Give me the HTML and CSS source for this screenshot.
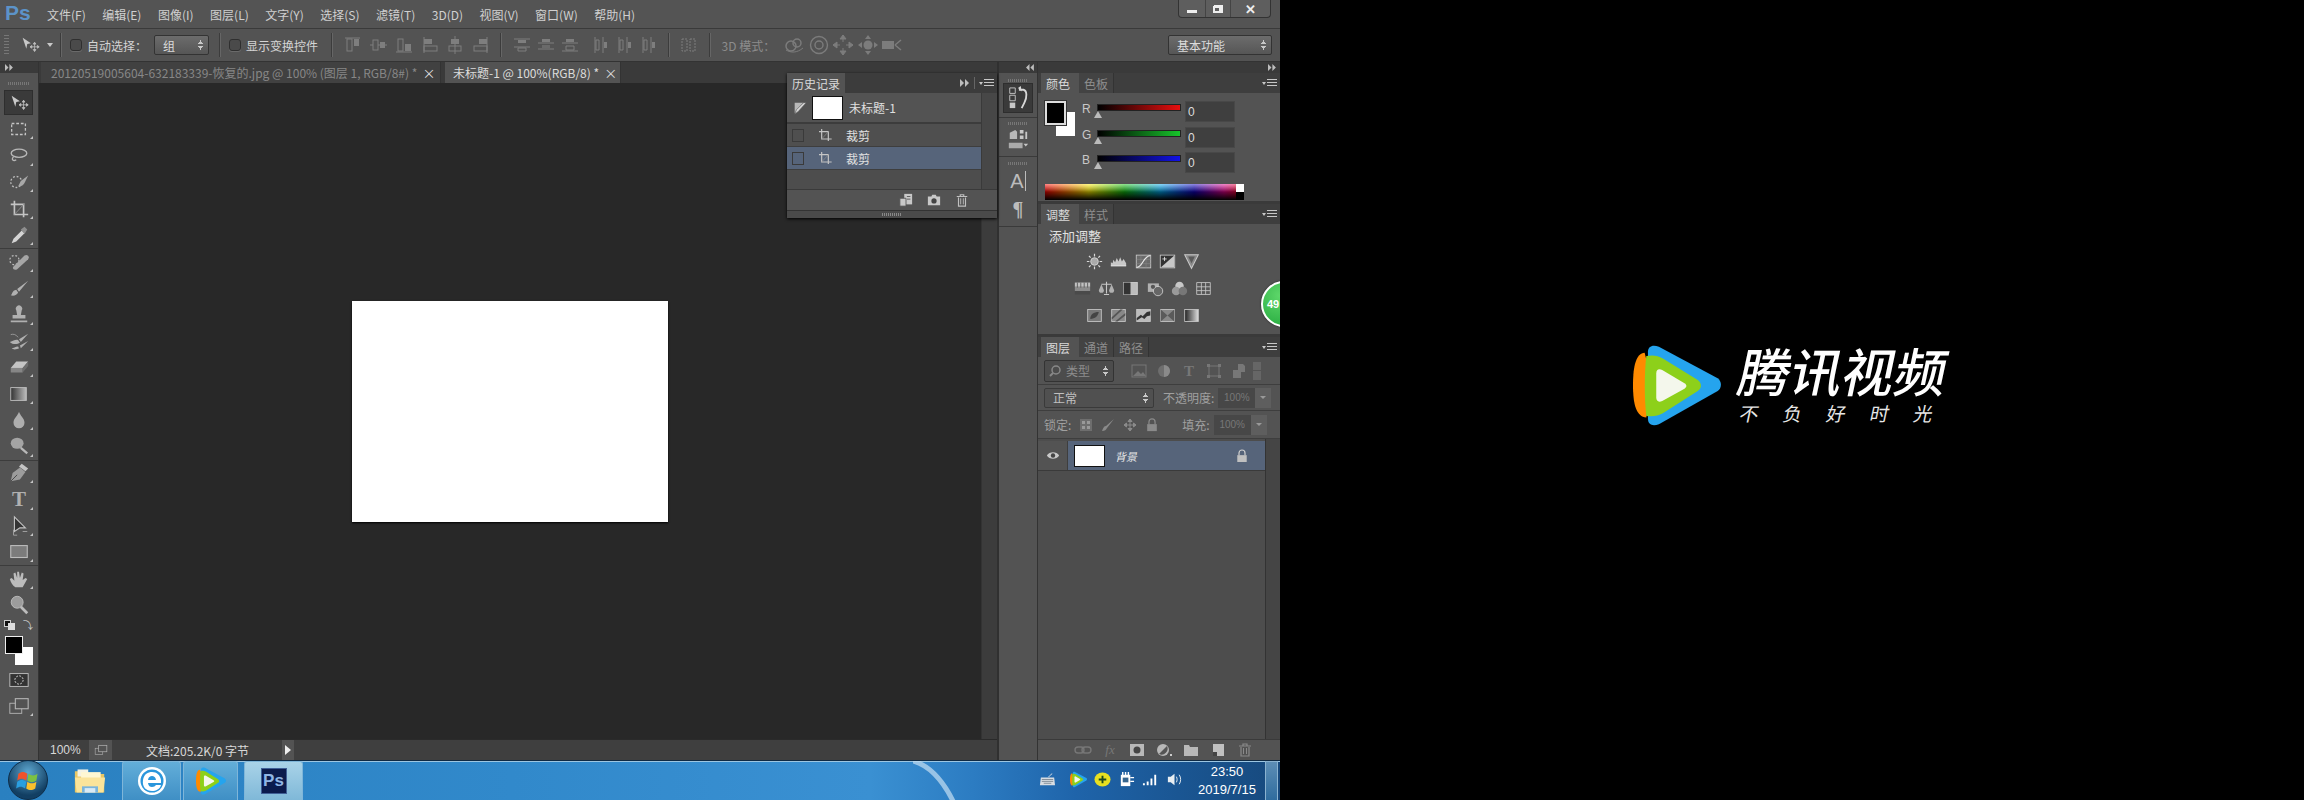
FILE: index.html
```html
<!DOCTYPE html>
<html lang="zh-CN">
<head>
<meta charset="utf-8">
<title>Photoshop</title>
<link rel="stylesheet" href="styles.css">
</head>
<body>
<svg class="defs" aria-hidden="true">
<defs>
<symbol id="dbl" viewBox="0 0 10 8"><path d="M1 0l4 4-4 4zM6 0l4 4-4 4z" fill="#bdbdbd"/></symbol>
<symbol id="dbl-l" viewBox="0 0 10 8"><path d="M5 0L1 4l4 4zM10 0L6 4l4 4z" fill="#bdbdbd"/></symbol>
<symbol id="t-move" viewBox="0 0 24 24"><path d="M4 4l9 6-4 1-1 5z" fill="#c8c8c8"/><path d="M17 9v10M12 14h10M17 9l-1.500 2h3zM17 19l-1.500-2h3zM12 14l2-1.500v3zM22 14l-2-1.500v3z" stroke="#bcbcbc" fill="#bcbcbc" stroke-width=".9"/></symbol>
<symbol id="t-marq" viewBox="0 0 24 24"><rect x="4" y="6" width="15" height="12" fill="none" stroke="#c4c4c4" stroke-width="1.400" stroke-dasharray="3 2"/></symbol>
<symbol id="t-lasso" viewBox="0 0 24 24"><ellipse cx="12" cy="9" rx="8.500" ry="4.500" fill="none" stroke="#b8b8b8" stroke-width="1.500"/><path d="M6 13c-3 3 0 5 3 3" fill="none" stroke="#b8b8b8" stroke-width="1.400"/></symbol>
<symbol id="t-quick" viewBox="0 0 24 24"><circle cx="9" cy="12" r="6" fill="none" stroke="#bcbcbc" stroke-width="1.400" stroke-dasharray="2 2"/><path d="M22 5l-8 6-3 6c4 0 6-2 7-4z" fill="#a8a8a8"/></symbol>
<symbol id="t-crop" viewBox="0 0 24 24"><path d="M7 3v15h15M3 7h14v14" fill="none" stroke="#c4c4c4" stroke-width="1.800"/><path d="M7 18L18 6" stroke="#909090"/></symbol>
<symbol id="t-drop" viewBox="0 0 24 24"><path d="M4 21l2-5 9-9 3 3-9 9z" fill="#d4d4d4"/><path d="M14 6l4-3 3 3-3 5z" fill="#8e8e8e"/></symbol>
<symbol id="t-heal" viewBox="0 0 24 24"><circle cx="7" cy="11" r="5" fill="none" stroke="#bcbcbc" stroke-dasharray="2 2" stroke-width="1.300"/><path d="M6 18L18 6c3-2 6 1 4 4L10 21c-3 2-6-1-4-3z" fill="#a6a6a6"/></symbol>
<symbol id="t-brush" viewBox="0 0 24 24"><path d="M22 4l-12 9 2 3zM3 20c2-1 1-5 6-6l2 3c-1 3-5 4-8 3z" fill="#b0b0b0"/></symbol>
<symbol id="t-stamp" viewBox="0 0 24 24"><path d="M9 8a3.500 3.500 0 1 1 6 0l-1 5h5v4H5v-4h5zM3 19h18v2H3z" fill="#b0b0b0"/></symbol>
<symbol id="t-hist" viewBox="0 0 24 24"><path d="M22 4l-10 6 2 3zM2 13c4-1 6-3 9-2l2 3c-3 2-8 2-11-1zM22 12l-9 5 1 3zM4 20c2 0 4-2 7-2l1 2c-2 1-6 2-8 0z" fill="#b0b0b0"/><path d="M3 5c3-1 6 0 8 3" stroke="#999" fill="none"/></symbol>
<symbol id="t-eraser" viewBox="0 0 24 24"><path d="M9 6h13l-6 7H3z" fill="#c4c4c4"/><path d="M3 13h13v5H3z" fill="#868686"/><path d="M16 13l6-7v5l-6 7z" fill="#6c6c6c"/></symbol>
<symbol id="t-grad" viewBox="0 0 24 24"><defs><linearGradient id="gr"><stop offset="0" stop-color="#333"/><stop offset="1" stop-color="#bbb"/></linearGradient></defs><rect x="3" y="5" width="17" height="14" fill="url(#gr)" stroke="#bcbcbc"/></symbol>
<symbol id="t-blur" viewBox="0 0 24 24"><path d="M12 3c1 4 6 7 6 12a6 6 0 0 1-12 0c0-5 5-8 6-12z" fill="#aeaeae"/></symbol>
<symbol id="t-dodge" viewBox="0 0 24 24"><ellipse cx="10" cy="9" rx="7" ry="6" fill="#a4a4a4"/><path d="M14 14l7 6" stroke="#b8b8b8" stroke-width="2.500"/></symbol>
<symbol id="t-pen" viewBox="0 0 24 24"><path d="M3 21l2-9 8-6 6 5-6 8z" fill="#9c9c9c"/><path d="M3 21l7-7" stroke="#444"/><path d="M12 5l3-3 7 5-3 3z" fill="#c4c4c4"/></symbol>
<symbol id="t-path" viewBox="0 0 24 24"><path d="M7 2l12 12h-6l-6 4z" fill="#333" stroke="#c4c4c4" stroke-width="1.200"/><path d="M6 16v6h4M16 18h5" stroke="#a4a4a4" fill="none"/></symbol>
<symbol id="t-rect" viewBox="0 0 24 24"><rect x="3" y="5" width="18" height="13" fill="#7c7c7c" stroke="#bcbcbc" stroke-width="1.200"/></symbol>
<symbol id="t-hand" viewBox="0 0 24 24"><path d="M8 21c-3-2-5-5-6-9l2-1 3 3-1-8 2-1 2 6V4h2l1 7 2-6 2 1-1 7 3-2 2 1-5 9z" fill="#bcbcbc"/></symbol>
<symbol id="t-zoom" viewBox="0 0 24 24"><circle cx="10" cy="9" r="6.500" fill="#9c9c9c" stroke="#bcbcbc"/><path d="M14 14l7 7" stroke="#bcbcbc" stroke-width="3"/></symbol>
<symbol id="t-mask" viewBox="0 0 24 24"><rect x="2" y="5" width="20" height="14" fill="#333" stroke="#c0c0c0"/><circle cx="12" cy="12" r="4.500" fill="none" stroke="#dcdcdc" stroke-dasharray="2 1.500"/></symbol>
<symbol id="t-screen" viewBox="0 0 24 24"><rect x="2" y="9" width="13" height="11" fill="none" stroke="#b4b4b4"/><rect x="8" y="4" width="14" height="11" fill="#535353" stroke="#b4b4b4" stroke-width="1.200"/></symbol>

<symbol id="a-1" viewBox="0 0 18 18"><path d="M1 2h15" stroke="#7e7e7e"/><rect x="3" y="3" width="5" height="12" fill="none" stroke="#7e7e7e"/><rect x="10" y="3" width="5" height="7" fill="#7e7e7e"/></symbol>
<symbol id="a-2" viewBox="0 0 18 18"><path d="M0 9h17" stroke="#7e7e7e"/><rect x="3" y="4" width="5" height="10" fill="#555" stroke="#7e7e7e"/><rect x="10" y="6" width="5" height="6" fill="#7e7e7e"/></symbol>
<symbol id="a-3" viewBox="0 0 18 18"><path d="M1 16h16" stroke="#7e7e7e"/><rect x="3" y="3" width="5" height="12" fill="none" stroke="#7e7e7e"/><rect x="10" y="8" width="6" height="7" fill="#7e7e7e"/></symbol>
<symbol id="a-4" viewBox="0 0 18 18"><path d="M3 1v16" stroke="#7e7e7e"/><rect x="3" y="3" width="8" height="5" fill="#7e7e7e"/><rect x="3" y="10" width="13" height="5" fill="none" stroke="#7e7e7e"/></symbol>
<symbol id="a-5" viewBox="0 0 18 18"><path d="M9 0v18" stroke="#7e7e7e"/><rect x="5" y="3" width="8" height="5" fill="#7e7e7e"/><rect x="3" y="10" width="12" height="5" fill="none" stroke="#7e7e7e"/></symbol>
<symbol id="a-6" viewBox="0 0 18 18"><path d="M15 1v16" stroke="#7e7e7e"/><rect x="7" y="3" width="8" height="5" fill="#7e7e7e"/><rect x="2" y="10" width="13" height="5" fill="none" stroke="#7e7e7e"/></symbol>
<symbol id="a-7" viewBox="0 0 18 18"><path d="M1 3h16M1 11h16" stroke="#7e7e7e"/><path d="M5 4h8v3H5z" fill="#7e7e7e"/><path d="M5 12h8v3H5z" fill="none" stroke="#7e7e7e"/></symbol>
<symbol id="a-8" viewBox="0 0 18 18"><path d="M1 7h16M1 13h16" stroke="#7e7e7e"/><path d="M5 3h8v3H5z" fill="#7e7e7e"/><path d="M5 9h8v3H5z" fill="#6a6a6a"/></symbol>
<symbol id="a-8b" viewBox="0 0 18 18"><path d="M1 7h16M1 15h16" stroke="#7e7e7e"/><path d="M5 3h8v3H5z" fill="#7e7e7e"/><path d="M5 10h8v4H5z" fill="none" stroke="#7e7e7e"/></symbol>
<symbol id="a-9" viewBox="0 0 18 18"><path d="M4 1v16M12 1v16" stroke="#7e7e7e"/><path d="M5 4h3v10H5z" fill="none" stroke="#7e7e7e"/><path d="M13 6h3v6h-3z" fill="#7e7e7e"/></symbol>
<symbol id="a-10" viewBox="0 0 18 18"><path d="M3 3h5v12H3zM11 3h5v12h-5z" fill="none" stroke="#7e7e7e" stroke-dasharray="2 1"/></symbol>

<symbol id="d-orbit" viewBox="0 0 22 22"><circle cx="8" cy="12" r="5" fill="none" stroke="#7c7c7c" stroke-width="1.500"/><circle cx="14" cy="9" r="4" fill="none" stroke="#7c7c7c" stroke-width="1.500"/><path d="M3 16c5 3 11 3 17-2" fill="none" stroke="#7c7c7c"/></symbol>
<symbol id="d-roll" viewBox="0 0 22 22"><circle cx="11" cy="11" r="8.500" fill="none" stroke="#7c7c7c" stroke-width="1.400"/><circle cx="11" cy="11" r="4" fill="none" stroke="#7c7c7c" stroke-width="1.400"/></symbol>
<symbol id="d-drag" viewBox="0 0 22 22"><path d="M11 1v7M11 14v7M1 11h7M14 11h7M11 1L8 5h6zM11 21l-3-4h6zM1 11l4-3v6zM21 11l-4-3v6z" stroke="#7c7c7c" fill="#7c7c7c"/></symbol>
<symbol id="d-slide" viewBox="0 0 22 22"><circle cx="11" cy="11" r="4.500" fill="#7c7c7c"/><path d="M11 1l-3 4h6zM11 21l-3-4h6zM1 11l4-3v6zM21 11l-4-3v6z" fill="#7c7c7c"/></symbol>
<symbol id="d-cam" viewBox="0 0 22 22"><rect x="1" y="7" width="12" height="8" fill="#7c7c7c"/><path d="M14 11l6-5M14 11l6 5" stroke="#7c7c7c" stroke-width="1.500"/></symbol>

<symbol id="adj-sun" viewBox="0 0 20 20"><circle cx="10" cy="10" r="4.500" fill="#aaa" stroke="#d8d8d8"/><path d="M10 1v3M10 16v3M1 10h3M16 10h3M3.500 3.500l2 2M14.500 14.500l2 2M16.500 3.500l-2 2M5.500 14.500l-2 2" stroke="#d8d8d8" stroke-width="1.400"/></symbol>
<symbol id="adj-lev" viewBox="0 0 20 20"><path d="M1 15v-4l2 1 1-4 2 3 2-5 2 4 2-5 2 5 2-3 3 5v3z" fill="#c8c8c8"/><path d="M1 15h18" stroke="#e0e0e0" stroke-width="1.500"/></symbol>
<symbol id="adj-cur" viewBox="0 0 20 20"><rect x="1.500" y="2.500" width="17" height="15" fill="#6a6a6a" stroke="#c8c8c8"/><path d="M1.500 7.500h17M1.500 12.500h17M7 2.500v15M13 2.500v15" stroke="#8a8a8a" stroke-width=".6"/><path d="M2 17C9 17 10 3 18 3" fill="none" stroke="#e8e8e8" stroke-width="1.400"/></symbol>
<symbol id="adj-exp" viewBox="0 0 20 20"><rect x="1.500" y="2.500" width="17" height="15" fill="#333" stroke="#c8c8c8"/><path d="M2 17L18 3v14z" fill="#c8c8c8"/><path d="M4 7h5M6.500 4.500v5" stroke="#e8e8e8"/></symbol>
<symbol id="adj-vib" viewBox="0 0 20 20"><path d="M2 2h16l-8 16z" fill="#8a8a8a" stroke="#c8c8c8" stroke-width="1.200"/><path d="M6 4h8l-4 8z" fill="#5a5a5a"/></symbol>
<symbol id="adj-hsl" viewBox="0 0 20 20"><rect x="1" y="3" width="18" height="5" fill="#c0c0c0"/><rect x="1" y="8" width="18" height="5" fill="#8c8c8c"/><rect x="1" y="13" width="18" height="4" fill="#4a4a4a"/><path d="M4 3v6M8 3v6M12 3v6M16 3v6" stroke="#555"/></symbol>
<symbol id="adj-bal" viewBox="0 0 20 20"><path d="M10 2v14M4 5h12M7 17h6" stroke="#c8c8c8" stroke-width="1.300"/><path d="M1 12l3-7 3 7a3 3 0 0 1-6 0zM13 12l3-7 3 7a3 3 0 0 1-6 0z" fill="#b0b0b0"/></symbol>
<symbol id="adj-bw" viewBox="0 0 20 20"><rect x="2" y="3" width="16" height="14" fill="#bcbcbc" stroke="#d4d4d4"/><rect x="2" y="3" width="8" height="14" fill="#333"/></symbol>
<symbol id="adj-photo" viewBox="0 0 20 20"><rect x="1" y="4" width="13" height="10" fill="#b0b0b0"/><circle cx="13" cy="13" r="5.500" fill="#666" stroke="#d0d0d0"/><circle cx="7" cy="8" r="2.500" fill="#555"/></symbol>
<symbol id="adj-mix" viewBox="0 0 20 20"><circle cx="10" cy="7" r="5" fill="#c8c8c8"/><circle cx="6" cy="13" r="5" fill="#9a9a9a"/><circle cx="14" cy="13" r="5" fill="#777"/></symbol>
<symbol id="adj-grid" viewBox="0 0 20 20"><path d="M2 3h16v14H2zM2 8h16M2 12.500h16M7.500 3v14M12.500 3v14" fill="#555" stroke="#c8c8c8"/></symbol>
<symbol id="adj-inv" viewBox="0 0 20 20"><rect x="2" y="3" width="16" height="14" fill="#777" stroke="#c8c8c8"/><path d="M5 14c0-5 4-8 10-8-1 5-4 8-10 8z" fill="#444"/></symbol>
<symbol id="adj-post" viewBox="0 0 20 20"><rect x="2" y="3" width="16" height="14" fill="#888" stroke="#c8c8c8"/><path d="M2 12L12 3h3L2 15zM6 17L18 7v3L9 17z" fill="#555"/></symbol>
<symbol id="adj-thr" viewBox="0 0 20 20"><rect x="2" y="3" width="16" height="14" fill="#bbb" stroke="#c8c8c8"/><path d="M2 13l5-4 2 2 5-5 4-1v5l-4 1-3 3-3-2-6 4z" fill="#333"/></symbol>
<symbol id="adj-sel" viewBox="0 0 20 20"><rect x="2" y="3" width="16" height="14" fill="#888" stroke="#c8c8c8"/><path d="M2 3l8 7-8 7zM18 3l-8 7 8 7z" fill="#5a5a5a"/></symbol>
<symbol id="adj-map" viewBox="0 0 20 20"><defs><linearGradient id="gm"><stop offset="0" stop-color="#222"/><stop offset="1" stop-color="#ddd"/></linearGradient></defs><rect x="2" y="3" width="16" height="14" fill="url(#gm)" stroke="#c8c8c8"/></symbol>

<symbol id="menu" viewBox="0 0 16 10"><path d="M1 4h4L3 7z" fill="#c8c8c8"/><path d="M6 1.500h10M6 4.500h10M6 7.500h10" stroke="#c8c8c8"/></symbol>
<symbol id="lockp" viewBox="0 0 14 16"><path d="M3.500 7V4.500a3.500 3.500 0 0 1 7 0V7" fill="none" stroke="#d0d0d0" stroke-width="1.400"/><rect x="1.500" y="7" width="11" height="8" fill="#c0c0c0"/></symbol>
<symbol id="tvlogo" viewBox="0 0 265 243">
  <path d="M35 23C10 25 0 60 0 120c0 60 10 95 40 98l20-98z" fill="#ff8a00"/>
  <path d="M45 20C45 3 60-3 78 5l177 95c13 10 13 28 0 38L78 238c-18 8-33 2-33-16z" fill="#25a4ee"/>
  <path d="M40 33c20-5 35-1 50 7l105 65c13 10 13 25 0 33L90 205c-15 8-30 11-50 8-6-53-6-128 0-180z" fill="#8dd01a"/>
  <path d="M70 85c0-12 8-15 18-10l67 40c8 5 8 11 0 16l-67 37c-10 5-18 2-18-10z" fill="#f4f7ec"/>
</symbol>
</defs>
</svg>

<div class="desktop">
  <div class="ps">
    <div class="menubar">
      <span class="pslogo">Ps</span>
      <nav class="menus">
        <span>文件(F)</span><span>编辑(E)</span><span>图像(I)</span><span>图层(L)</span><span>文字(Y)</span><span>选择(S)</span><span>滤镜(T)</span><span>3D(D)</span><span>视图(V)</span><span>窗口(W)</span><span>帮助(H)</span>
      </nav>
      <div class="winbtns">
        <span class="wb wb-min"><i></i></span>
        <span class="wb wb-res"><i></i><b></b></span>
        <span class="wb wb-close">✕</span>
      </div>
    </div>

    <div class="options">
      <span class="grip-v"></span>
      <svg class="ic ic-opt"><use href="#t-move"/></svg>
      <span class="caret"></span>
      <span class="vsep"></span>
      <span class="check"></span>
      <span class="lbl lbl-first">自动选择：</span>
      <span class="select sel-group">组<em class="updown"></em></span>
      <span class="vsep"></span>
      <span class="check"></span>
      <span class="lbl">显示变换控件</span>
      <span class="vsep"></span>
      <div class="aligns aligns-a">
        <svg class="ic a"><use href="#a-1"/></svg><svg class="ic a"><use href="#a-2"/></svg><svg class="ic a"><use href="#a-3"/></svg>
        <svg class="ic a"><use href="#a-4"/></svg><svg class="ic a"><use href="#a-5"/></svg><svg class="ic a"><use href="#a-6"/></svg>
      </div>
      <span class="vsep"></span>
      <div class="aligns aligns-b">
        <svg class="ic a"><use href="#a-7"/></svg><svg class="ic a"><use href="#a-8"/></svg><svg class="ic a"><use href="#a-8b"/></svg>
        <span class="ag"></span>
        <svg class="ic a"><use href="#a-9"/></svg><svg class="ic a"><use href="#a-9"/></svg><svg class="ic a"><use href="#a-9"/></svg>
      </div>
      <span class="vsep"></span>
      <svg class="ic a"><use href="#a-10"/></svg>
      <span class="vsep"></span>
      <span class="lbl lbl-dim">3D 模式：</span>
      <div class="mode3d">
        <svg class="ic d"><use href="#d-orbit"/></svg><svg class="ic d"><use href="#d-roll"/></svg><svg class="ic d"><use href="#d-drag"/></svg><svg class="ic d"><use href="#d-slide"/></svg><svg class="ic d"><use href="#d-cam"/></svg>
      </div>
      <span class="select sel-work">基本功能<em class="updown"></em></span>
    </div>

    <div class="work">
      <aside class="toolbar">
        <div class="tb-top"><svg class="dbl"><use href="#dbl"/></svg></div>
        <div class="tb-grip"></div>
        <div class="tool active"><svg class="ic"><use href="#t-move"/></svg></div>
        <div class="tool corner"><svg class="ic"><use href="#t-marq"/></svg></div>
        <div class="tool corner"><svg class="ic"><use href="#t-lasso"/></svg></div>
        <div class="tool corner"><svg class="ic"><use href="#t-quick"/></svg></div>
        <div class="tool corner"><svg class="ic"><use href="#t-crop"/></svg></div>
        <div class="tool corner sep-after"><svg class="ic"><use href="#t-drop"/></svg></div>
        <div class="tool corner"><svg class="ic"><use href="#t-heal"/></svg></div>
        <div class="tool corner"><svg class="ic"><use href="#t-brush"/></svg></div>
        <div class="tool corner"><svg class="ic"><use href="#t-stamp"/></svg></div>
        <div class="tool corner"><svg class="ic"><use href="#t-hist"/></svg></div>
        <div class="tool corner"><svg class="ic"><use href="#t-eraser"/></svg></div>
        <div class="tool corner"><svg class="ic"><use href="#t-grad"/></svg></div>
        <div class="tool corner"><svg class="ic"><use href="#t-blur"/></svg></div>
        <div class="tool corner sep-after"><svg class="ic"><use href="#t-dodge"/></svg></div>
        <div class="tool corner"><svg class="ic"><use href="#t-pen"/></svg></div>
        <div class="tool corner tool-t">T</div>
        <div class="tool corner"><svg class="ic"><use href="#t-path"/></svg></div>
        <div class="tool corner sep-after"><svg class="ic"><use href="#t-rect"/></svg></div>
        <div class="tool corner"><svg class="ic"><use href="#t-hand"/></svg></div>
        <div class="tool"><svg class="ic"><use href="#t-zoom"/></svg></div>
        <div class="swatch-top"><span class="mini"><i></i><b></b></span><span class="swapx">⤵</span></div>
        <div class="swatches"><i class="sw-bg"></i><i class="sw-fg"></i></div>
        <div class="tool tool-mask"><svg class="ic"><use href="#t-mask"/></svg></div>
        <div class="tool corner"><svg class="ic"><use href="#t-screen"/></svg></div>
      </aside>

      <section class="doc">
        <div class="tabs">
          <div class="tab">20120519005604-632183339-恢复的.jpg @ 100% (图层 1, RGB/8#) * <span class="x">×</span></div>
          <div class="tab tab-on">未标题-1 @ 100%(RGB/8) * <span class="x">×</span></div>
        </div>
        <div class="canvas-row">
          <div class="canvas"><div class="page"></div></div>
          <div class="doc-scroll"></div>
        </div>
        <div class="status">
          <span class="zoomv">100%</span>
          <span class="st-ico"><svg class="ic st"><use href="#t-screen"/></svg></span>
          <span class="docsize">文档:205.2K/0 字节</span>
          <span class="st-arrow"></span>
        </div>
      </section>

      <div class="dock">
        <div class="dock-top"><svg class="dbl"><use href="#dbl-l"/></svg></div>
        <div class="dock-group g1">
          <div class="dock-grip"></div>
          <div class="dock-btn on">
            <svg class="ic db" viewBox="0 0 24 28"><path d="M3 3h6v6H3zM3 11h6v6H3z" fill="none" stroke="#c8c8c8"/><path d="M3 19h6v6H3z" fill="#c8c8c8"/><path d="M13 5h5c4 1 4 8 1 14l-3 6" fill="none" stroke="#d8d8d8" stroke-width="2"/><path d="M12 3l4 4-1-6z" fill="#d8d8d8"/></svg>
          </div>
        </div>
        <div class="dock-group g2">
          <div class="dock-grip"></div>
          <div class="dock-btn">
            <svg class="ic db" viewBox="0 0 24 28"><path d="M3 6l6-3 2 2v8H3z" fill="#b8b8b8"/><path d="M14 3h4v4h-4zM14 9h4v4h-4zM20 5h2v8h-2z" fill="#c8c8c8"/><rect x="2" y="17" width="15" height="6" fill="#aaa"/><path d="M18 18h5l-2.500 3z" fill="#c8c8c8"/></svg>
          </div>
        </div>
        <div class="dock-group g3">
          <div class="dock-grip"></div>
          <div class="dock-btn"><span class="dock-a">A</span><i class="dock-bar"></i></div>
          <div class="dock-btn"><span class="dock-p">¶</span></div>
        </div>
      </div>

      <div class="panels">
        <div class="panels-top"><svg class="dbl"><use href="#dbl"/></svg></div>

        <section class="panel color-panel">
          <header class="ph"><span class="pt on">颜色</span><span class="pt">色板</span><svg class="pm"><use href="#menu"/></svg></header>
          <div class="color-body">
            <div class="big-sw"><i class="b-bg"></i><i class="b-fg"></i></div>
            <div class="rgb">
              <div class="rgb-row"><span class="rl">R</span><span class="track tr"></span><span class="num">0</span></div>
              <div class="rgb-row"><span class="rl">G</span><span class="track tg"></span><span class="num">0</span></div>
              <div class="rgb-row"><span class="rl">B</span><span class="track tb"></span><span class="num">0</span></div>
            </div>
          </div>
          <div class="ramp"><i class="ramp-end"></i></div>
        </section>

        <section class="panel adj-panel">
          <header class="ph"><span class="pt on">调整</span><span class="pt">样式</span><svg class="pm"><use href="#menu"/></svg></header>
          <div class="adj-title">添加调整</div>
          <div class="adj-rows">
            <div class="adj-row"><svg class="adj"><use href="#adj-sun"/></svg><svg class="adj"><use href="#adj-lev"/></svg><svg class="adj"><use href="#adj-cur"/></svg><svg class="adj"><use href="#adj-exp"/></svg><svg class="adj"><use href="#adj-vib"/></svg></div>
            <div class="adj-row"><svg class="adj"><use href="#adj-hsl"/></svg><svg class="adj"><use href="#adj-bal"/></svg><svg class="adj"><use href="#adj-bw"/></svg><svg class="adj"><use href="#adj-photo"/></svg><svg class="adj"><use href="#adj-mix"/></svg><svg class="adj"><use href="#adj-grid"/></svg></div>
            <div class="adj-row"><svg class="adj"><use href="#adj-inv"/></svg><svg class="adj"><use href="#adj-post"/></svg><svg class="adj"><use href="#adj-thr"/></svg><svg class="adj"><use href="#adj-sel"/></svg><svg class="adj"><use href="#adj-map"/></svg></div>
          </div>
          <div class="badge">49</div>
        </section>

        <section class="panel layers-panel">
          <header class="ph"><span class="pt on">图层</span><span class="pt">通道</span><span class="pt">路径</span><svg class="pm"><use href="#menu"/></svg></header>
          <div class="lrow lrow-filter">
            <span class="select sel-type"><svg class="lens" viewBox="0 0 14 14"><circle cx="8" cy="6" r="4" fill="none" stroke="#888" stroke-width="1.500"/><path d="M5 9l-3 3" stroke="#888" stroke-width="2"/></svg>类型<em class="updown"></em></span>
            <div class="filters">
              <svg class="fi" viewBox="0 0 18 18"><rect x="2" y="3" width="14" height="12" fill="none" stroke="#777"/><path d="M3 14l5-5 3 3 2-2 3 4z" fill="#777"/></svg>
              <svg class="fi" viewBox="0 0 18 18"><circle cx="9" cy="9" r="6" fill="#6e6e6e"/><path d="M9 3a6 6 0 0 1 0 12z" fill="#8a8a8a"/></svg>
              <span class="fi-t">T</span>
              <svg class="fi" viewBox="0 0 18 18"><path d="M4 4h10v10H4z" fill="none" stroke="#777"/><path d="M2 2h3v3H2zM13 2h3v3h-3zM2 13h3v3H2zM13 13h3v3h-3z" fill="#777"/></svg>
              <svg class="fi" viewBox="0 0 18 18"><path d="M8 2h5l2 2v6H8zM3 8h8v8H3z" fill="#777"/></svg>
            </div>
            <span class="filter-toggle"><i></i><i></i></span>
          </div>
          <div class="lrow lrow-mode">
            <span class="select sel-mode">正常<em class="updown"></em></span>
            <span class="lbl-l">不透明度:</span>
            <span class="pct">100%</span><span class="pbtn"></span>
          </div>
          <div class="lrow lrow-lock">
            <span class="lbl-l">锁定:</span>
            <div class="locks">
              <svg class="li" viewBox="0 0 14 14"><path d="M1 1h12v12H1z" fill="#6e6e6e"/><path d="M3 3h3v3H3zM8 8h3v3H8zM8 3h3v3H8zM3 8h3v3H3z" fill="#999"/></svg>
              <svg class="li" viewBox="0 0 14 14"><path d="M13 1L5 8l1 2zM1 13c3 0 4-1 5-3L5 8c-2 0-3 2-4 5z" fill="#8a8a8a"/></svg>
              <svg class="li" viewBox="0 0 14 14"><path d="M7 1v12M1 7h12M7 1L5 3.500h4zM7 13l-2-2.500h4zM1 7l2.500-2v4zM13 7l-2.500-2v4z" stroke="#8a8a8a" fill="#8a8a8a"/></svg>
              <svg class="li" viewBox="0 0 14 16"><path d="M3.500 7V4.500a3.500 3.500 0 0 1 7 0V7" fill="none" stroke="#8a8a8a" stroke-width="1.400"/><rect x="1.500" y="7" width="11" height="8" fill="#8a8a8a"/></svg>
            </div>
            <span class="lbl-l lbl-fill">填充:</span>
            <span class="pct">100%</span><span class="pbtn"></span>
          </div>
          <div class="layers-list">
            <div class="layer-col">
              <div class="layer">
                <span class="eye"><svg viewBox="0 0 16 12"><path d="M1 6c3-5 11-5 14 0-3 5-11 5-14 0z" fill="#c8c8c8"/><circle cx="8" cy="6" r="2.500" fill="#444"/></svg></span>
                <span class="thumb"></span>
                <span class="lname">背景</span>
                <svg class="llock"><use href="#lockp"/></svg>
              </div>
            </div>
            <div class="lscroll"></div>
          </div>
          <footer class="lfoot">
            <svg class="lf" viewBox="0 0 18 14"><rect x="1" y="4" width="9" height="6" rx="3" fill="none" stroke="#777" stroke-width="1.400"/><rect x="8" y="4" width="9" height="6" rx="3" fill="none" stroke="#777" stroke-width="1.400"/></svg>
            <span class="fx">fx</span>
            <svg class="lf" viewBox="0 0 18 14"><rect x="2" y="1" width="14" height="12" fill="#b8b8b8"/><circle cx="9" cy="7" r="3.500" fill="#444"/></svg>
            <svg class="lf" viewBox="0 0 18 14"><circle cx="8" cy="7" r="6" fill="#b8b8b8"/><path d="M4 11L12 3A6 6 0 0 1 4 11z" fill="#555"/><rect x="15" y="11" width="2" height="2" fill="#ccc"/></svg>
            <svg class="lf" viewBox="0 0 18 14"><path d="M2 2h5l1 2h8v9H2z" fill="#b8b8b8"/></svg>
            <svg class="lf" viewBox="0 0 18 14"><path d="M4 1h11v12H4z" fill="#c0c0c0"/><path d="M4 9h4v4H4z" fill="#444"/></svg>
            <svg class="lf" viewBox="0 0 18 14"><path d="M3 3h12M7 3V1h4v2M5 4v9h8V4" fill="none" stroke="#8a8a8a" stroke-width="1.200"/><path d="M7.500 5v6M10.500 5v6" stroke="#8a8a8a"/></svg>
          </footer>
        </section>
      </div>

      <section class="history">
        <header class="ph hist-head"><span class="pt on">历史记录</span><svg class="hist-arrows"><use href="#dbl"/></svg><i class="hist-sep"></i><svg class="pm"><use href="#menu"/></svg></header>
        <div class="hist-body">
          <div class="hist-list">
            <div class="hist-snap">
              <svg class="snap-ico" viewBox="0 0 18 18"><path d="M3 3h10L3 15z" fill="#b8b8b8"/><path d="M16 3L7 13l-4 3 2-5 8-8z" fill="#d8d8d8" stroke="#555" stroke-width=".7"/></svg>
              <span class="snap-thumb"></span>
              <span class="snap-name">未标题-1</span>
            </div>
            <div class="hist-row"><i class="hbox"></i><svg class="ic hcrop"><use href="#t-crop"/></svg><span>裁剪</span></div>
            <div class="hist-row sel"><i class="hbox"></i><svg class="ic hcrop"><use href="#t-crop"/></svg><span>裁剪</span></div>
          </div>
          <div class="hist-scroll"></div>
        </div>
        <footer class="hist-foot">
          <svg class="hf" viewBox="0 0 16 16"><path d="M6 1h9v12H6z" fill="#c8c8c8"/><path d="M1 6h7v9H1z" fill="#c8c8c8" stroke="#555"/><path d="M9 4h4M9 7h4" stroke="#555"/></svg>
          <svg class="hf" viewBox="0 0 16 16"><path d="M1 4h4l1-2h4l1 2h4v10H1z" fill="#c8c8c8"/><circle cx="8" cy="9" r="3" fill="#444"/></svg>
          <svg class="hf" viewBox="0 0 16 16"><path d="M2 4h12M6 4V2h4v2M4 5v10h8V5" fill="none" stroke="#c0c0c0" stroke-width="1.300"/><path d="M6.500 6v7M9.500 6v7" stroke="#c0c0c0"/></svg>
        </footer>
        <div class="hist-grip"><i></i></div>
      </section>
    </div>
  </div>

  <div class="taskbar">
    <svg class="streak" viewBox="0 0 60 40"><path d="M0 0C18 5 30 20 40 40" fill="none" stroke="#c4def2" stroke-width="5" opacity=".7"/></svg>
    <div class="orb"><svg viewBox="0 0 24 24"><path d="M3 6c3-2 5-2 8 0l-1 6c-3-2-5-2-8 0z" fill="#f0532b"/><path d="M12 6c3 2 5 2 8 0l-1 6c-3 2-5 2-8 0z" fill="#7cc142"/><path d="M2 13c3-2 5-2 8 0l-1 6c-3-2-5-2-8 0z" fill="#2a9fe0"/><path d="M11 13c3 2 5 2 8 0l-1 6c-3 2-5 2-8 0z" fill="#fbc02d"/></svg></div>
    <div class="tb-app tb-plain">
      <svg viewBox="0 0 36 30"><path d="M1 4h13l3 3h17v21H1z" fill="#e9c765"/><path d="M4 2h12v8H4z" fill="#f5f3e4"/><path d="M8 5h22v7H8z" fill="#fff7d2"/><path d="M1 11h34l-2 17H3z" fill="#fbe49a"/><path d="M9 21h18v7H9z" fill="#7bb5dc"/><path d="M12 23h12v5H12z" fill="#d9eaf5"/></svg>
    </div>
    <div class="tb-app tb-ie">
      <svg viewBox="0 0 32 32"><circle cx="16" cy="16" r="14" fill="#fff"/><circle cx="16" cy="16" r="11.500" fill="#2a96dc"/><path d="M7 15c1-6 5-8 9-8 5 0 8 3 9 8v3H12c.5 3 2 4 4 4 2 0 3-1 4-2h5c-1 4-5 6-9 6-6 0-10-4-9-11zm5 0h8c-.5-3-2-4-4-4s-3.500 1-4 4z" fill="#fff"/></svg>
    </div>
    <div class="tb-app tb-tv"><svg class="tvsvg"><use href="#tvlogo"/></svg></div>
    <div class="tb-app tb-ps"><span class="ps-tile">Ps</span></div>
    <div class="tray">
      <svg class="tr-i tr-kb" viewBox="0 0 18 16"><path d="M14 2c-2 0-2 3-4 3" stroke="#d8dde2" fill="none"/><path d="M2 6h14l1 8H1z" fill="#d8dde2"/><path d="M3 8h12M3 10h12M5 12h8" stroke="#7e8a96"/></svg>
      <svg class="tr-i tr-tv"><use href="#tvlogo"/></svg>
      <svg class="tr-i" viewBox="0 0 18 16"><ellipse cx="9" cy="8" rx="8.500" ry="7.500" fill="#e8e021"/><path d="M8 4h2v3h3v2h-3v3H8V9H5V7h3z" fill="#1f4a1c"/></svg>
      <svg class="tr-i" viewBox="0 0 18 18"><path d="M3 4h10v12H3z" fill="#fff"/><path d="M5 1v4M8 1v4M11 1v4M13 7h4M13 11h4" stroke="#fff" stroke-width="1.500"/><path d="M5 7h6v5H5z" fill="#37668f"/></svg>
      <svg class="tr-i" viewBox="0 0 18 16"><path d="M1 12h2v2H1zM5 10h2v4H5zM9 7h2v7H9zM13 3h2v11h-2z" fill="#fff"/></svg>
      <svg class="tr-i" viewBox="0 0 18 16"><path d="M2 5h3l4-3v12l-4-3H2z" fill="#e8eef2"/><path d="M11 5c1 2 1 4 0 6M14 3c2 3 2 7 0 10" stroke="#e8eef2" fill="none"/></svg>
    </div>
    <div class="clock"><span>23:50</span><span>2019/7/15</span></div>
    <div class="showdesk"></div>
  </div>
</div>

<div class="video">
  <div class="vlogo">
    <svg class="vmark"><use href="#tvlogo"/></svg>
    <div class="vtext">
      <div class="vname">腾讯视频</div>
      <div class="vslogan">不负好时光</div>
    </div>
  </div>
</div>
</body>
</html>
```

FILE: styles.css
```css
* { box-sizing: border-box; }
html { margin: 0; width: 2304px; height: 800px; overflow: hidden; }
body {
  margin: 0;
  display: flex;
  width: 2304px;
  height: 800px;
  overflow: hidden;
  background: #000;
  font-family: "Noto Sans CJK SC", "Liberation Sans", sans-serif;
  font-size: 12px;
  color: #d2d2d2;
}
.defs { width: 0; height: 0; display: block; flex: none; }
i, em, b { display: block; font-style: normal; }
.ic { display: block; width: 24px; height: 24px; flex: none; }
.dbl { display: block; width: 9px; height: 7px; }

.desktop { width: 1280px; height: 800px; flex: none; display: flex; flex-direction: column; }
.ps { height: 760px; display: flex; flex-direction: column; background: #535353; }

/* menu */
.menubar { height: 29px; flex: none; display: flex; align-items: center; background: #545454; border-bottom: 1px solid #3a3a3a; position: relative; }
.pslogo { width: 42px; padding-left: 5px; font: bold 21px/26px "Liberation Sans", sans-serif; color: #5c93c9; flex: none; align-self: flex-start; }
.menus { display: flex; gap: 16.500px; padding-left: 5px; color: #d0d0d0; font-size: 12px; }
.winbtns { margin-left: auto; margin-right: 9px; align-self: flex-start; display: flex; height: 18px; border: 1px solid #333; border-top: 0; border-radius: 0 0 4px 4px; background: #5e5e5e; }
.wb { display: flex; align-items: center; justify-content: center; color: #eee; position: relative; }
.wb-min { width: 27px; border-right: 1px solid #444; }
.wb-min i { width: 10px; height: 3px; background: #eee; margin-top: 5px; }
.wb-res { width: 25px; border-right: 1px solid #444; }
.wb-res i { width: 9px; height: 8px; border: 2px solid #eee; }
.wb-res b { width: 8px; height: 7px; border: 2px solid #eee; background: #5e5e5e; position: absolute; left: 7px; top: 6px; }
.wb-close { width: 39px; font-size: 13px; font-weight: bold; }

/* options */
.options { height: 33px; flex: none; display: flex; align-items: center; background: #535353; border-bottom: 1px solid #333; padding-left: 4px; }
.grip-v { width: 5px; height: 20px; margin-right: 9px; background: repeating-linear-gradient(#777 0 1px, transparent 1px 3px); }
.ic-opt { width: 24px; height: 22px; }
.caret { width: 0; height: 0; border: 3.500px solid transparent; border-top: 4px solid #c8c8c8; border-bottom: 0; margin: 0 7px 0 5px; }
.vsep { width: 1px; height: 24px; background: #3c3c3c; border-right: 1px solid #666; flex: none; box-sizing: content-box; }
.check { width: 12px; height: 12px; margin-left: 8px; border-radius: 3px; background: #4a4a4a; border: 1px solid #2f2f2f; box-shadow: 0 1px 0 #6a6a6a; flex: none; }
.lbl { margin: 0 13px 0 5px; color: #d4d4d4; white-space: nowrap; }
.lbl-first { margin-right: 7px; }
.lbl-dim { margin: 0 8px 0 11px; color: #8c8c8c; }
.select { display: flex; align-items: center; height: 20px; padding-left: 8px; position: relative; flex: none; background: linear-gradient(#6c6c6c, #565656); border: 1px solid #333; border-radius: 2px; color: #dcdcdc; }
.updown { position: absolute; right: 5px; top: 50%; width: 5px; height: 10px; margin-top: -5px; background: conic-gradient(from 150deg at 50% 0, #c8c8c8 0 60deg, transparent 0) top/5px 4px no-repeat, conic-gradient(from -30deg at 50% 100%, #c8c8c8 0 60deg, transparent 0) bottom/5px 4px no-repeat; }
.sel-group { width: 55px; margin-right: 10px; }
.sel-work { width: 104px; margin-left: auto; margin-right: 8px; }
.aligns { display: flex; align-items: center; }
.aligns-a { gap: 7.500px; padding: 0 10px 0 11px; }
.aligns-b { gap: 6px; padding: 0 11px 0 11px; }
.ic.a { width: 18px; height: 18px; }
.aligns .ag { width: 0; }
.options > .ic.a { margin: 0 12px 0 9px; }
.mode3d { display: flex; gap: 2.500px; }
.ic.d { width: 22px; height: 22px; }

/* work */
.work { flex: 1; min-height: 0; display: flex; position: relative; }

/* toolbar */
.toolbar { width: 39px; flex: none; display: flex; flex-direction: column; background: #535353; border-right: 1px solid #333; }
.tb-top { height: 11px; background: #3a3a3a; padding: 2px 0 0 4px; flex: none; }
.tb-grip { height: 14px; margin: 3px 8px 0; flex: none; background: repeating-linear-gradient(90deg, #777 0 1px, transparent 1px 2px) center/100% 3px no-repeat; }
.tool { height: 26.450px; flex: none; display: flex; align-items: center; justify-content: center; position: relative; }
.tool.active { background: #3a3a3a; border: 1px solid #2e2e2e; margin: 0 5px 1px 4px; height: 25px; }
.tool.active .ic { width: 22px; height: 22px; }
.tool.corner::after { content: ""; position: absolute; right: 5px; bottom: 3px; border-left: 3px solid transparent; border-bottom: 3px solid #c4c4c4; }
.tool .ic { width: 22px; height: 22px; }
.sep-after { box-shadow: 0 1px 0 #3c3c3c; }
.tool-t { font: bold 21px/26px "Liberation Serif", serif; color: #b0b0b0; }
.swatch-top { height: 13px; flex: none; display: flex; justify-content: space-between; padding: 0 5px 0 4px; align-items: center; }
.mini { position: relative; width: 11px; height: 10px; display: block; }
.mini b { position: absolute; right: 0; bottom: 0; width: 7px; height: 7px; background: #ddd; }
.mini i { position: absolute; left: 0; top: 0; width: 7px; height: 7px; background: #111; border: 1px solid #ccc; }
.swapx { font-size: 10px; line-height: 10px; color: #ccc; }
.swatches { height: 33px; flex: none; position: relative; }
.sw-bg { position: absolute; left: 15px; top: 16px; width: 18px; height: 18px; background: #fff; }
.sw-fg { position: absolute; left: 5px; top: 5px; width: 18px; height: 18px; background: #000; border: 1px solid #eee; }
.tool-mask { margin-top: 2px; }

/* doc */
.doc { flex: 1; min-width: 0; display: flex; flex-direction: column; background: #282828; }
.tabs { height: 21px; flex: none; display: flex; gap: 4px; background: #3a3a3a; padding-left: 2px; }
.tab { width: 400px; display: flex; align-items: center; padding-left: 10px; background: #414141; color: #878787; font-size: 12px; white-space: nowrap; overflow: hidden; gap: 3px; border-right: 1px solid #333; }
.tab-on { width: 176px; background: #535353; color: #dcdcdc; padding-left: 8px; }
.x { color: #ddd; font-size: 13px; line-height: 12px; margin-left: 2px; }
.canvas-row { flex: 1; min-height: 0; display: flex; }
.canvas { flex: 1; background: #282828; padding: 218px 0 0 313px; }
.page { width: 316px; height: 221px; background: #fff; box-shadow: 0 1px 2px #000; }
.doc-scroll { width: 16px; background: #3c3c3c; border-left: 1px solid #333; }
.status { height: 21px; flex: none; display: flex; align-items: center; background: #3f3f3f; color: #d8d8d8; font-size: 12px; border-top: 1px solid #2a2a2a; }
.zoomv { width: 50px; padding-left: 11px; font-family: "Liberation Sans", sans-serif; }
.st-ico { width: 23px; height: 100%; background: #535353; display: flex; align-items: center; justify-content: center; flex: none; }
.ic.st { width: 14px; height: 14px; }
.docsize { width: 170px; padding-left: 34px; white-space: nowrap; flex: none; }
.st-arrow { width: 12px; height: 100%; background: #535353; position: relative; flex: none; }
.st-arrow::after { content: ""; position: absolute; left: 3px; top: 5px; border-left: 6px solid #eee; border-top: 5px solid transparent; border-bottom: 5px solid transparent; }

/* dock */
.dock { width: 41px; flex: none; display: flex; flex-direction: column; background: #535353; border-left: 2px solid #303030; border-right: 1px solid #333; }
.dock-top { height: 11px; flex: none; background: #3a3a3a; padding: 2px 3px 0 0; display: flex; justify-content: flex-end; }
.dock-group { flex: none; border-bottom: 1px solid #3a3a3a; display: flex; flex-direction: column; align-items: center; }
.g1 { height: 45px; padding-top: 4px; }
.g2 { height: 39px; padding-top: 2px; }
.g3 { height: 70px; padding-top: 3px; gap: 1px; }
.dock-grip { width: 20px; height: 6px; flex: none; background: repeating-linear-gradient(90deg, #777 0 1px, transparent 1px 2px) center/100% 3px no-repeat; }
.dock-btn { width: 30px; height: 27px; display: flex; align-items: center; justify-content: center; position: relative; flex: none; }
.dock-btn.on { height: 30px; background: #3a3a3a; border: 1px solid #2e2e2e; }
.ic.db { width: 22px; height: 26px; }
.dock-a { font: 20px/24px "Liberation Sans", sans-serif; color: #bcbcbc; }
.dock-bar { width: 1px; height: 20px; background: #bcbcbc; margin-left: 1px; }
.dock-p { font: bold 20px/24px "Liberation Serif", serif; color: #bcbcbc; }

/* panels */
.panels { width: 242px; flex: none; display: flex; flex-direction: column; background: #3a3a3a; overflow: hidden; }
.panels-top { height: 11px; flex: none; background: #3a3a3a; padding: 2px 4px 0 0; display: flex; justify-content: flex-end; }
.panel { background: #535353; flex: none; position: relative; }
.ph { height: 20px; display: flex; align-items: stretch; background: #3e3e3e; position: relative; padding-left: 3px; }
.pt { padding: 0 5px; display: flex; align-items: center; font-size: 12px; color: #8e8e8e; background: #434343; border-right: 1px solid #333; }
.pt.on { background: #535353; color: #dadada; border-right: 0; padding-right: 9px; }
.hist-head .pt.on { padding-right: 5px; }
.pm { width: 16px; height: 10px; position: absolute; right: 3px; top: 5px; }

.color-panel { height: 128px; margin-bottom: 3px; }
.color-body { display: flex; padding: 8px 0 0 7px; height: 91px; }
.big-sw { width: 37px; position: relative; flex: none; }
.b-bg { position: absolute; left: 11px; top: 11px; width: 19px; height: 24px; background: #fff; }
.b-fg { position: absolute; left: 0; top: 0; width: 21px; height: 24px; background: #000; border: 2px solid #ddd; outline: 1px solid #333; }
.rgb { display: flex; flex-direction: column; gap: 4px; }
.rgb-row { display: flex; height: 21.500px; align-items: flex-start; }
.rl { width: 15px; color: #c8c8c8; font-family: "Liberation Sans", sans-serif; padding-top: 1px; flex: none; }
.track { width: 84px; height: 7px; margin: 3px 4px 0 0; border: 1px solid #222; position: relative; flex: none; }
.track::after { content: ""; position: absolute; left: -4px; top: 6px; width: 0; height: 0; border: 4px solid transparent; border-bottom: 7px solid #bbb; border-top: 0; }
.tr { background: linear-gradient(90deg, #000, #e80f0f); }
.tg { background: linear-gradient(90deg, #000, #17c42b); }
.tb { background: linear-gradient(90deg, #000, #1212e8); }
.num { width: 50px; height: 21px; background: #3f3f3f; border: 1px solid #484848; padding: 3px 0 0 2px; color: #dcdcdc; font-family: "Liberation Sans", sans-serif; flex: none; }
.ramp { width: 199px; height: 16px; margin-left: 7px; position: relative; background: linear-gradient(#0000, #000), linear-gradient(90deg, #ff0000, #ffee00 22%, #10c010 40%, #00a8f0 58%, #1000c0 75%, #e0008a 90%, #f00000); }
.ramp-end { position: absolute; right: 0; top: 0; width: 8px; height: 16px; background: linear-gradient(#fff 50%, #000 50%); }
.ramp::before { content: ""; position: absolute; inset: 0 0 50% 0; background: linear-gradient(#fff8, #fff0); }

.adj-panel { height: 130px; margin-bottom: 3px; }
.adj-title { padding: 2px 0 0 11px; font-size: 13px; color: #e0e0e0; height: 28px; line-height: 20px; }
.adj-rows { display: flex; flex-direction: column; align-items: center; gap: 9px; width: 210px; }
.adj-row { display: flex; gap: 7.200px; height: 18px; align-items: center; }
.adj { width: 17px; height: 17px; flex: none; }
.badge { position: absolute; left: 223px; top: 77px; width: 46px; height: 46px; border-radius: 50%; background: radial-gradient(circle at 40% 30%, #5ed76a, #1fa53a); border: 2px solid #fff; color: #fff; font: bold 11px/42px "Liberation Sans", sans-serif; padding-left: 4px; box-shadow: 0 0 2px #222; }

.layers-panel { flex: 1; display: flex; flex-direction: column; min-height: 0; }
.lrow { display: flex; align-items: center; flex: none; border-bottom: 1px solid #3e3e3e; padding-left: 6px; }
.lrow-filter { height: 28px; }
.sel-type { width: 70px; padding-left: 3px; height: 22px; color: #8c8c8c; background: #4c4c4c; gap: 4px; }
.lens { width: 14px; height: 14px; flex: none; }
.filters { display: flex; gap: 7px; margin-left: 16px; align-items: center; }
.fi { width: 18px; height: 18px; flex: none; }
.fi-t { width: 18px; text-align: center; font: bold 15px/18px "Liberation Serif", serif; color: #777; }
.filter-toggle { margin-left: 5px; display: flex; flex-direction: column; width: 8px; height: 18px; gap: 1px; }
.filter-toggle i { flex: 1; background: #666; }
.lrow-mode { height: 26px; }
.sel-mode { width: 110px; height: 20px; color: #c0c0c0; background: #505050; border-color: #3a3a3a; }
.lbl-l { color: #a0a0a0; white-space: nowrap; }
.lrow-mode .lbl-l { margin: 0 4px 0 9px; }
.pct { width: 37px; height: 20px; background: #474747; color: #777; font: 10px/20px "Liberation Sans", sans-serif; text-align: center; flex: none; }
.pbtn { width: 16px; height: 20px; background: #5e5e5e; position: relative; flex: none; }
.pbtn::after { content: ""; position: absolute; left: 5px; top: 8px; border: 3px solid transparent; border-top: 3px solid #999; border-bottom: 0; }
.lrow-lock { height: 28px; }
.locks { display: flex; gap: 8px; margin-left: 8px; align-items: center; }
.li { width: 14px; height: 14px; flex: none; }
.lbl-fill { margin: 0 4px 0 23px; }
.layers-list { flex: 1; display: flex; min-height: 0; }
.layer-col { flex: 1; min-width: 0; background: #4d4d4d; }
.layer { height: 30px; display: flex; align-items: center; background: linear-gradient(90deg, #535353 0 30px, #56647a 30px); margin-top: 2px; border-bottom: 1px solid #3a3a3a; }
.eye { width: 30px; display: flex; justify-content: center; flex: none; border-right: 1px solid #3e3e3e; height: 100%; align-items: center; }
.eye svg { width: 14px; height: 11px; display: block; }
.thumb { width: 31px; height: 22px; margin-left: 6px; background: #fff; border: 1px solid #111; flex: none; }
.lname { margin-left: 11px; color: #e8e8e8; font-size: 11px; transform: skewX(-12deg); }
.llock { width: 12px; height: 14px; margin-left: auto; margin-right: 17px; }
.lscroll { width: 15px; background: #454545; border-left: 1px solid #333; flex: none; }
.lfoot { height: 21px; flex: none; display: flex; align-items: center; gap: 9px; padding-left: 36px; background: #535353; border-top: 1px solid #3a3a3a; }
.lf { width: 18px; height: 14px; flex: none; }
.fx { width: 18px; text-align: center; font: italic 13px/14px "Liberation Serif", serif; color: #777; }

/* history */
.history { position: absolute; left: 787px; top: 11px; width: 210px; background: #535353; box-shadow: 0 1px 3px #000; z-index: 2; }
.hist-head { height: 20px; background: #3c3c3c; padding-left: 0; }
.hist-arrows { position: absolute; right: 28px; top: 6px; width: 10px; height: 8px; display: block; }
.hist-sep { position: absolute; right: 22px; top: 4px; width: 1px; height: 12px; background: #666; }
.hist-body { display: flex; height: 96px; }
.hist-list { flex: 1; min-width: 0; background: #4d4d4d; }
.hist-scroll { width: 16px; background: #474747; border-left: 1px solid #3a3a3a; }
.hist-snap { height: 31px; display: flex; align-items: center; background: #535353; border-bottom: 2px solid #3c3c3c; padding-left: 5px; }
.snap-ico { width: 16px; height: 16px; flex: none; }
.snap-thumb { width: 31px; height: 24px; margin-left: 4px; background: #fff; border: 1px solid #111; flex: none; }
.snap-name { margin-left: 6px; color: #e0e0e0; }
.hist-row { height: 23px; display: flex; align-items: center; padding-left: 5px; background: #4f4f4f; color: #e0e0e0; border-bottom: 1px solid #3e3e3e; }
.hist-row.sel { background: #56647a; }
.hbox { width: 12px; height: 13px; border: 1px solid #3a3a3a; flex: none; }
.ic.hcrop { width: 16px; height: 16px; margin: 0 13px 0 13px; }
.hist-foot { height: 21px; display: flex; align-items: center; justify-content: flex-end; gap: 14px; padding-right: 28px; background: #535353; border-top: 1px solid #3a3a3a; }
.hf { width: 14px; height: 14px; flex: none; }
.hist-grip { height: 8px; display: flex; justify-content: center; align-items: center; background: #4a4a4a; border-top: 1px solid #333; }
.hist-grip i { width: 20px; height: 3px; background: repeating-linear-gradient(90deg, #888 0 1px, transparent 1px 2px); }

/* taskbar */
.taskbar { height: 40px; flex: none; display: flex; align-items: stretch; position: relative; overflow: hidden; border-top: 1px solid #0f2a44; box-shadow: inset 0 1px 0 #9cc6e2; background: linear-gradient(90deg, #2a80c0 0, #3189cb 40%, #3a90d2 68%, #2c7cc2 76%, #1f64aa 84%, #1a5693 92%, #17497d 100%); color: #fff; }
.streak { position: absolute; left: 913px; top: 0; width: 60px; height: 40px; display: block; }
.orb { width: 40px; height: 40px; margin: -1px 9px 0 8px; border-radius: 50%; background: radial-gradient(circle at 50% 30%, #5ea7d0, #123f63 70%); border: 1px solid #0e2c46; display: flex; align-items: center; justify-content: center; flex: none; position: relative; }
.orb svg { width: 27px; height: 27px; display: block; }
.tb-app { display: flex; align-items: center; justify-content: center; flex: none; position: relative; }
.tb-plain { width: 65px; }
.tb-plain svg { width: 32px; height: 30px; display: block; }
.tb-ie, .tb-tv, .tb-ps { margin-right: 2px; border: 1px solid #7fb6d9; border-bottom: 0; border-radius: 3px 3px 0 0; background: linear-gradient(#63aed9, #3f8fc5); }
.tb-ie { width: 59px; }
.tb-ie svg { width: 32px; height: 32px; display: block; }
.tb-tv { width: 55px; margin-right: 6px; }
.tvsvg { width: 30px; height: 28px; display: block; }
.tb-ps { width: 59px; background: linear-gradient(#a9d3e8, #7fb8d8); }
.ps-tile { width: 26px; height: 26px; background: #0b1b4d; color: #8fb5e6; border: 1px solid #3f5f96; font: bold 17px/24px "Liberation Sans", sans-serif; text-align: center; }
.tray { margin-left: auto; display: flex; align-items: center; gap: 7px; padding-bottom: 3px; position: relative; }
.tr-i { width: 17px; height: 17px; display: block; flex: none; }
.tr-kb { margin-right: 7px; }
.clock { width: 72px; margin: 0 2px 0 8px; display: flex; flex-direction: column; align-items: center; justify-content: center; font: 13px/18px "Liberation Sans", sans-serif; color: #fff; }
.showdesk { width: 13px; margin-right: 2px; border: 1px solid #8ab2d0; border-bottom: 0; background: linear-gradient(#5d8eb6, #2f6c9e); flex: none; }

/* right video brand */
.video { flex: 1; min-width: 0; background: #000; padding: 345px 0 0 353px; }
.vlogo { display: flex; gap: 19px; align-items: flex-start; }
.vmark { width: 88px; height: 81px; display: block; flex: none; }
.vtext { color: #fff; margin-top: -3px; }
.vname { font-size: 52px; line-height: 56px; font-weight: 500; transform: skewX(-12deg); white-space: nowrap; }
.vslogan { font-size: 19px; line-height: 24px; letter-spacing: 24.500px; margin-top: 3px; transform: skewX(-12deg); white-space: nowrap; color: #e6e6e6; }
```
